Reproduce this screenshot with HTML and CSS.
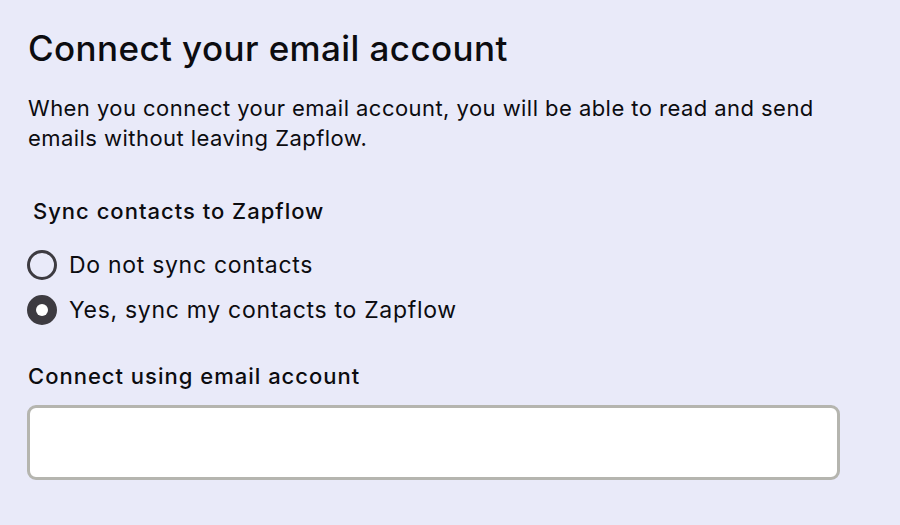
FILE: index.html
```html
<!DOCTYPE html>
<html>
<head>
<meta charset="utf-8">
<link rel="stylesheet" href="styles.css">
</head>
<body>
<div class="page">
  <h1 class="title">Connect your email account</h1>
  <p class="desc">When you connect your email account, you will be able to read and send emails without leaving Zapflow.</p>
  <div class="group-label">Sync contacts to Zapflow</div>
  <div class="options">
    <label class="option"><span class="radio"></span><span class="option-text">Do not sync contacts</span></label>
    <label class="option"><span class="radio checked"></span><span class="option-text">Yes, sync my contacts to Zapflow</span></label>
  </div>
  <div class="field-label">Connect using email account</div>
  <div class="input"></div>
</div>
</body>
</html>
```

FILE: styles.css
```css
html, body {
  margin: 0;
  padding: 0;
}
body {
  background: #e9eaf9;
  font-family: Inter, "Noto Sans", sans-serif;
  color: #0c0c10;
  width: 900px;
  height: 525px;
  overflow: hidden;
}
.page {
  padding: 28px 0 0 28px;
  width: 812px;
}
.title {
  margin: 0;
  font-size: 35px;
  font-weight: 500;
  line-height: 40px;
  letter-spacing: 0.4px;
}
.desc {
  margin: 25px 0 0 0;
  font-size: 22px;
  line-height: 30px;
  font-weight: 400;
  letter-spacing: 0.45px;
  width: 800px;
}
.group-label {
  margin: 43px 0 0 5px;
  font-size: 22px;
  line-height: 30px;
  font-weight: 500;
  letter-spacing: 1px;
}
.options {
  margin-top: 24px;
  display: flex;
  flex-direction: column;
  gap: 15px;
}
.option {
  display: flex;
  align-items: center;
  gap: 12px;
  height: 30px;
  margin-left: -1px;
}
.radio {
  box-sizing: border-box;
  width: 30px;
  height: 30px;
  border-radius: 50%;
  border: 3px solid #3d3b41;
  background: transparent;
  flex: none;
  position: relative;
}
.radio.checked {
  background: #3d3b41;
}
.radio.checked::after {
  content: "";
  position: absolute;
  left: 50%;
  top: 50%;
  width: 12px;
  height: 12px;
  margin: -6px 0 0 -6px;
  border-radius: 50%;
  background: #ffffff;
}
.option-text {
  font-size: 23px;
  line-height: 30px;
  letter-spacing: 0.7px;
}
.field-label {
  margin-top: 36px;
  font-size: 22px;
  line-height: 30px;
  font-weight: 500;
  letter-spacing: 1px;
}
.input {
  margin: 14px 0 0 -1px;
  box-sizing: border-box;
  width: 813px;
  height: 75px;
  background: #ffffff;
  border: 3px solid #b5b5af;
  border-radius: 9px;
}
```
